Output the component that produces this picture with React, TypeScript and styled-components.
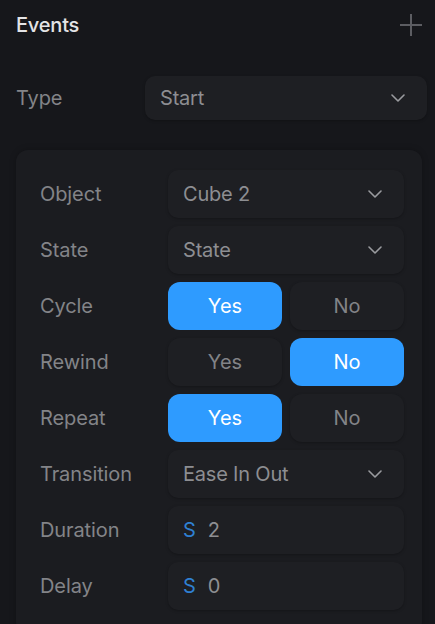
import { useState } from "react";
import styled, { createGlobalStyle } from "styled-components";

const GlobalStyle = createGlobalStyle`
  html, body {
    margin: 0;
    background: #16171b;
  }
  body {
    font-family: Inter, "Noto Sans", sans-serif;
    -webkit-font-smoothing: antialiased;
  }
`;

const Panel = styled.div`
  width: 435px;
  min-height: 624px;
  overflow: hidden;
`;

const Header = styled.header`
  display: flex;
  justify-content: space-between;
  align-items: center;
  padding: 12px 13px 0 16px;
  height: 26px;
`;

const Title = styled.h1`
  margin: 0;
  font-size: 20px;
  font-weight: 500;
  line-height: 26px;
  color: #e4e4e6;
  letter-spacing: -0.2px;
`;

const AddButton = styled.button`
  display: flex;
  padding: 0;
  border: 0;
  background: none;
  color: #5c5d62;
  cursor: pointer;
`;

const TypeRow = styled.div`
  display: grid;
  grid-template-columns: 129px 1fr;
  align-items: center;
  margin-top: 38px;
  padding: 0 8px 0 16px;
`;

const Card = styled.section`
  margin: 30px 13px 0 16px;
  padding: 20px 18px 24px 24px;
  background: #1b1c20;
  border-radius: 12px;
  box-shadow: 0 0 6px rgba(0, 0, 0, 0.25);
  display: grid;
  grid-template-columns: 128px 1fr;
  grid-auto-rows: 48px;
  row-gap: 8px;
  align-items: center;
`;

const Label = styled.span`
  font-size: 20px;
  color: #838488;
  letter-spacing: -0.1px;
`;

const Field = styled.div<{ $height?: number }>`
  display: flex;
  align-items: center;
  height: ${(p) => p.$height ?? 48}px;
  padding: 0 22px 0 15px;
  border-radius: 10px;
  background: #1e1f23;
  box-shadow: 0 1px 3px rgba(0, 0, 0, 0.25);
  font-size: 20px;
  color: #8d8e92;
  letter-spacing: -0.2px;
`;

const Value = styled.span`
  flex: 1;
`;

const Unit = styled.span`
  color: #2f80d2;
  margin-right: 12px;
`;

const Segmented = styled.div`
  display: grid;
  grid-template-columns: 1fr 1fr;
  gap: 8px;
  height: 48px;
`;

const Option = styled.button<{ $active: boolean }>`
  border: 0;
  border-radius: 12px;
  font-family: inherit;
  font-size: 20px;
  cursor: pointer;
  background: ${(p) => (p.$active ? "#2e9bff" : "#1e1f23")};
  color: ${(p) => (p.$active ? "#ffffff" : "#828387")};
  box-shadow: ${(p) => (p.$active ? "none" : "0 1px 3px rgba(0,0,0,0.25)")};
`;

function Chevron() {
  return (
    <svg width="14" height="8" viewBox="0 0 14 8" fill="none">
      <polyline points="1,1 7,7 13,1" stroke="#9a9b9f" strokeWidth="1.6" strokeLinecap="round" strokeLinejoin="round" />
    </svg>
  );
}

function Select({ value, height }: { value: string; height?: number }) {
  return (
    <Field $height={height}>
      <Value>{value}</Value>
      <Chevron />
    </Field>
  );
}

function Toggle({ value, onChange }: { value: boolean; onChange: (v: boolean) => void }) {
  return (
    <Segmented>
      <Option $active={value} onClick={() => onChange(true)}>Yes</Option>
      <Option $active={!value} onClick={() => onChange(false)}>No</Option>
    </Segmented>
  );
}

function App() {
  const [cycle, setCycle] = useState(true);
  const [rewind, setRewind] = useState(false);
  const [repeat, setRepeat] = useState(true);

  return (
    <Panel>
      <GlobalStyle />
      <Header>
        <Title>Events</Title>
        <AddButton aria-label="Add event">
          <svg width="22" height="22" viewBox="0 0 22 22">
            <path d="M11 0v22M0 11h22" stroke="currentColor" strokeWidth="2" />
          </svg>
        </AddButton>
      </Header>

      <TypeRow>
        <Label>Type</Label>
        <Select value="Start" height={44} />
      </TypeRow>

      <Card>
        <Label>Object</Label>
        <Select value="Cube 2" />
        <Label>State</Label>
        <Select value="State" />
        <Label>Cycle</Label>
        <Toggle value={cycle} onChange={setCycle} />
        <Label>Rewind</Label>
        <Toggle value={rewind} onChange={setRewind} />
        <Label>Repeat</Label>
        <Toggle value={repeat} onChange={setRepeat} />
        <Label>Transition</Label>
        <Select value="Ease In Out" />
        <Label>Duration</Label>
        <Field>
          <Unit>S</Unit>
          <Value>2</Value>
        </Field>
        <Label>Delay</Label>
        <Field>
          <Unit>S</Unit>
          <Value>0</Value>
        </Field>
      </Card>
    </Panel>
  );
}

export default App;
